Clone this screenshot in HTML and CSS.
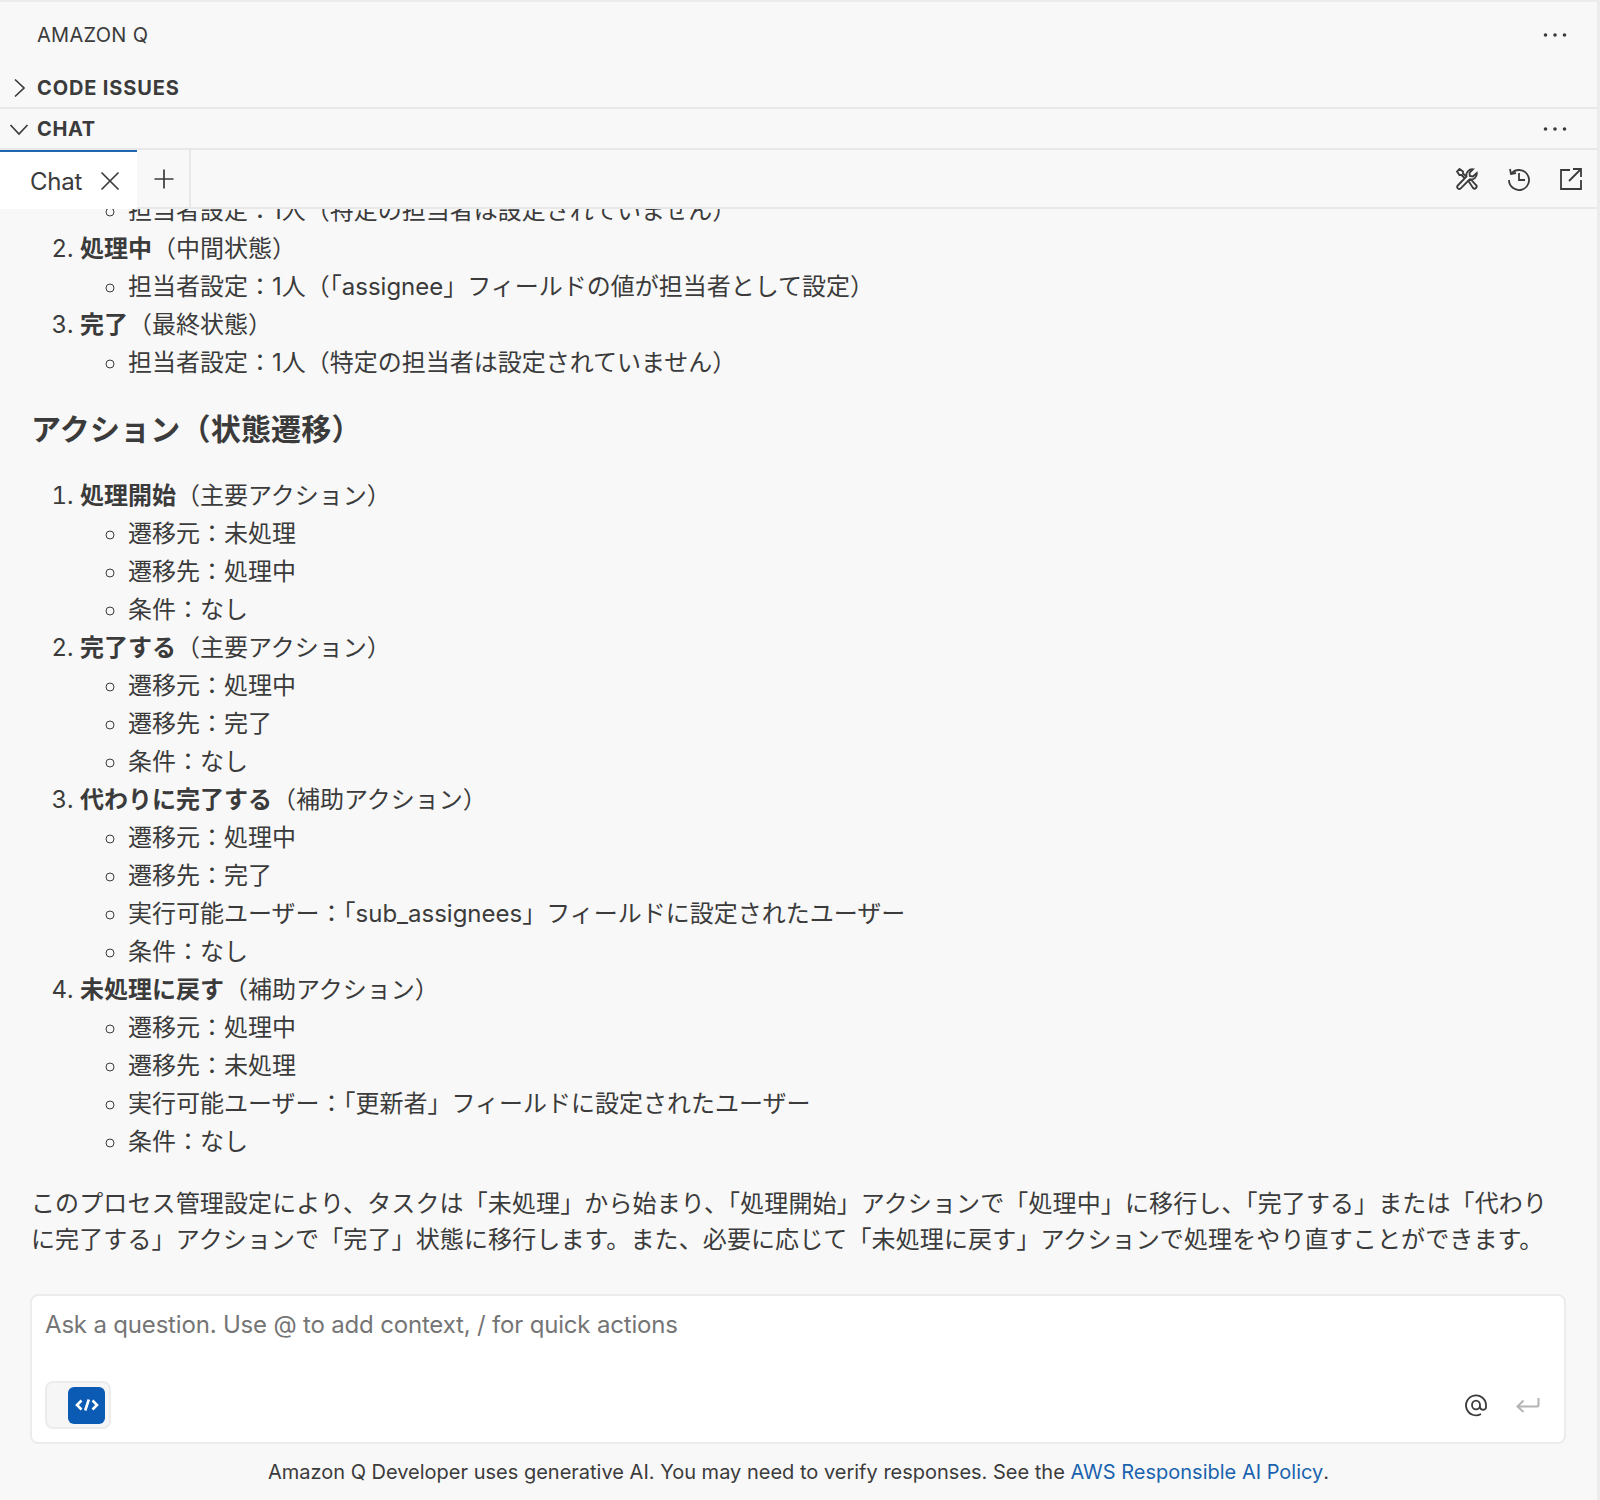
FILE: index.html
```html
<!DOCTYPE html>
<html lang="ja">
<head>
<meta charset="utf-8">
<title>Amazon Q</title>
<link rel="stylesheet" href="styles.css">
</head>
<body>
<div class="panel">
  <header class="title-bar">
    <span class="title">AMAZON Q</span>
    <svg class="dots" width="24" height="6" viewBox="0 0 24 6"><circle cx="2.5" cy="3" r="1.8"/><circle cx="12" cy="3" r="1.8"/><circle cx="21.5" cy="3" r="1.8"/></svg>
  </header>
  <div class="section section-code">
    <svg class="chev" width="24" height="24" viewBox="0 0 24 24"><path d="M8 3.5 L17 12 L8 20.5"/></svg>
    <span class="section-name">CODE ISSUES</span>
  </div>
  <div class="section section-chat">
    <svg class="chev" width="24" height="24" viewBox="0 0 24 24"><path d="M3.5 8 L12 17 L20.5 8"/></svg>
    <span class="section-name">CHAT</span>
    <svg class="dots" width="24" height="6" viewBox="0 0 24 6"><circle cx="2.5" cy="3" r="1.8"/><circle cx="12" cy="3" r="1.8"/><circle cx="21.5" cy="3" r="1.8"/></svg>
  </div>
  <div class="tabs">
    <div class="tab">
      <span class="tab-label">Chat</span>
      <svg class="line-icon" width="20" height="20" viewBox="0 0 20 20"><path d="M1.5 1.5 L18.5 18.5 M18.5 1.5 L1.5 18.5"/></svg>
    </div>
    <div class="add-tab">
      <svg class="line-icon" width="20" height="20" viewBox="0 0 20 20"><path d="M10 .5 V19.5 M.5 10 H19.5"/></svg>
    </div>
    <div class="tab-tools">
      <svg class="tool" width="24" height="24" viewBox="0 0 24 24"><path d="M21.8 6 L18 9.5 L14.8 9 L14.5 5.8 L18 2.3 A6 6 0 0 0 11.5 9.5 L2.8 18.5 A2 2 0 0 0 5.7 21.3 L14.5 12.5 A6 6 0 0 0 21.8 6 Z"/><path d="M11 9 L8 6.5 L8 4.5 L4.5 2 L2 4.5 L4.5 8 L6.5 8 L9.5 11"/><path d="M13.5 14 L15.8 12.5 L21 18 A2 2 0 0 1 18 21 Z"/></svg>
      <svg class="tool" width="24" height="24" viewBox="0 0 24 24"><path d="M3 2 L4 7 L9 6"/><path d="M4 7 A10 10 0 1 1 2 13"/><path d="M12 6 V13 H18"/></svg>
      <svg class="tool" width="24" height="24" viewBox="0 0 24 24"><path d="M11 3 H2 V22 H22 V13"/><path d="M10 14 L21.5 2.5 M14 2 H22 V10"/></svg>
    </div>
  </div>
  <main class="messages">
    <div class="message">
      <ol class="steps">
        <li class="cut"><ul><li>担当者設定：1人（特定の担当者は設定されていません）</li></ul></li>
        <li value="2"><strong>処理中</strong>（中間状態）
          <ul><li>担当者設定：1人（「assignee」フィールドの値が担当者として設定）</li></ul>
        </li>
        <li><strong>完了</strong>（最終状態）
          <ul><li>担当者設定：1人（特定の担当者は設定されていません）</li></ul>
        </li>
      </ol>
      <h3>アクション（状態遷移）</h3>
      <ol class="steps">
        <li><strong>処理開始</strong>（主要アクション）
          <ul><li>遷移元：未処理</li><li>遷移先：処理中</li><li>条件：なし</li></ul>
        </li>
        <li><strong>完了する</strong>（主要アクション）
          <ul><li>遷移元：処理中</li><li>遷移先：完了</li><li>条件：なし</li></ul>
        </li>
        <li><strong>代わりに完了する</strong>（補助アクション）
          <ul><li>遷移元：処理中</li><li>遷移先：完了</li><li>実行可能ユーザー：「sub_assignees」フィールドに設定されたユーザー</li><li>条件：なし</li></ul>
        </li>
        <li><strong>未処理に戻す</strong>（補助アクション）
          <ul><li>遷移元：処理中</li><li>遷移先：未処理</li><li>実行可能ユーザー：「更新者」フィールドに設定されたユーザー</li><li>条件：なし</li></ul>
        </li>
      </ol>
      <p class="summary">このプロセス管理設定により、タスクは「未処理」から始まり、「処理開始」アクションで「処理中」に移行し、「完了する」または「代わりに完了する」アクションで「完了」状態に移行します。また、必要に応じて「未処理に戻す」アクションで処理をやり直すことができます。</p>
    </div>
  </main>
  <section class="composer">
    <div class="prompt">Ask a question. Use @ to add context, / for quick actions</div>
    <div class="composer-row">
      <div class="context-toggle">
        <span class="code-badge">
          <svg width="24" height="14" viewBox="0 0 24 14"><path d="M6.5 2.5 L2 7 L6.5 11.5 M17.5 2.5 L22 7 L17.5 11.5 M13.8 1.5 L10.2 12.5"/></svg>
        </span>
      </div>
      <div class="composer-actions">
        <svg class="at" width="24" height="24" viewBox="0 0 24 24"><path d="M16 12 A4 4.4 0 1 1 8 12 A4 4.4 0 1 1 16 12 V14 A2.8 2.8 0 0 0 22 13.5 V12 A10 10 0 1 0 17 21"/></svg>
        <svg class="enter" width="24" height="16" viewBox="0 0 24 16"><path d="M22.5 1 V8 Q22.5 9.5 21 9.5 H2 M7.5 3.5 L1.5 9.5 L7.5 15"/></svg>
      </div>
    </div>
  </section>
  <footer class="disclaimer">Amazon Q Developer uses generative AI. You may need to verify responses. See the <a href="#">AWS Responsible AI Policy</a>.</footer>
</div>
</body>
</html>
```
FILE: styles.css
```css
* { box-sizing: border-box; }
html, body { margin: 0; height: 100%; }
body {
  background: #f8f8f8;
  color: #3b3b3b;
  font-family: Inter, "Noto Sans CJK JP", sans-serif;
  overflow: hidden;
}
.panel {
  height: 1500px;
  display: flex;
  flex-direction: column;
  border-top: 2px solid #ececec;
  border-right: 3px solid #ececec;
}
.title-bar {
  height: 66px;
  flex: none;
  display: flex;
  align-items: center;
  justify-content: space-between;
  padding: 0 30px 0 37px;
}
.title { font-size: 20px; letter-spacing: .3px; }
.dots { fill: #3b3b3b; }
.section {
  display: flex;
  align-items: center;
  flex: none;
  padding-left: 7px;
  padding-right: 30px;
  gap: 6px;
  border-bottom: 2px solid #e8e8e8;
}
.section-code { height: 41px; }
.section-chat { height: 41px; }
.section-name { font-size: 20px; font-weight: 700; flex: 1; letter-spacing: .65px; }
.section-code .section-name { letter-spacing: .85px; }
.chev { fill: none; stroke: #3b3b3b; stroke-width: 1.7; flex: none; }
.tabs {
  height: 59px;
  flex: none;
  display: flex;
  align-items: stretch;
  border-bottom: 2px solid #e8e8e8;
}
.tab {
  width: 137px;
  height: 59px;
  background: #fff;
  border-top: 2px solid #1f67b0;
  display: flex;
  align-items: center;
  gap: 18px;
  padding-left: 30px;
  font-size: 24px;
}
.tab-label { letter-spacing: -.2px; padding-top: 2px; }
.line-icon { fill: none; stroke: #3b3b3b; stroke-width: 1.7; flex: none; }
.add-tab {
  width: 54px;
  border-right: 2px solid #e8e8e8;
  display: flex;
  align-items: center;
  justify-content: center;
  padding-left: 1px;
}
.tab-tools {
  flex: 1;
  display: flex;
  align-items: center;
  justify-content: flex-end;
  gap: 28px;
  padding-right: 14px;
}
.tool { fill: none; stroke: #3b3b3b; stroke-width: 1.8; }
.messages {
  flex: 1;
  min-height: 0;
  overflow: hidden;
  display: flex;
  flex-direction: column;
  justify-content: flex-end;
  padding: 0 40px 0 31px;
}
.message { flex: none; font-size: 24px; line-height: 38px; padding-bottom: 36px; }
.steps { margin: 0; padding-left: 49px; }
.steps ul { margin: 0; padding-left: 48px; list-style: circle; }
.cut { list-style: none; }
strong { font-weight: 700; }
h3 { font-size: 30px; line-height: 44px; margin: 25px 0 26px; font-weight: 700; letter-spacing: .2px; }
.summary { margin: 25px 0 0; line-height: 36px; letter-spacing: .12px; }
.composer {
  flex: none;
  height: 150px;
  margin: 0 31px 0 30px;
  background: #fff;
  border: 2px solid #ececec;
  border-radius: 8px;
  display: flex;
  flex-direction: column;
  justify-content: space-between;
  padding: 14px 13px 13px;
}
.prompt { font-size: 24px; line-height: 30px; color: #757575; letter-spacing: -.18px; }
.composer-row { display: flex; align-items: center; justify-content: space-between; }
.context-toggle {
  width: 66px;
  height: 48px;
  background: #f6f6f6;
  border: 2px solid #ececec;
  border-radius: 8px;
  display: flex;
  align-items: center;
  justify-content: flex-end;
  padding-right: 4px;
}
.code-badge {
  width: 37px;
  height: 37px;
  background: #0b5bb5;
  border-radius: 6px;
  display: flex;
  align-items: center;
  justify-content: center;
}
.code-badge svg { fill: none; stroke: #fff; stroke-width: 2.6; }
.composer-actions { display: flex; align-items: center; gap: 28px; padding-right: 11px; }
.at { fill: none; stroke: #3b3b3b; stroke-width: 1.8; }
.enter { fill: none; stroke: #b4b4b4; stroke-width: 2; }
.disclaimer {
  flex: none;
  height: 56px;
  display: flex;
  align-items: center;
  justify-content: center;
  white-space: pre-wrap;
  font-size: 20px;
}
.disclaimer a { color: #1a63ae; text-decoration: none; }
```
